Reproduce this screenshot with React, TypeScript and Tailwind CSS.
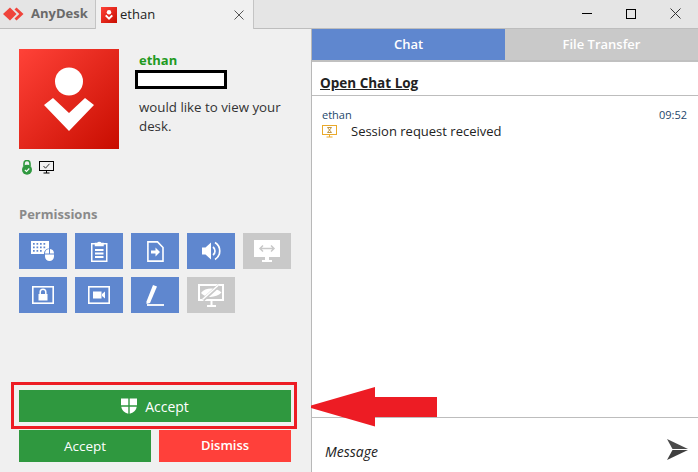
import React from 'react';

const font = "font-['Open_Sans','Noto_Sans',sans-serif]";

// --- Icons ---

const Logo: React.FC<{ className?: string }> = ({ className }) => (
  <svg className={className} viewBox="0 0 100 100">
    <defs>
      <linearGradient id="av" x1="0" y1="0" x2="1" y2="1">
        <stop offset="0" stopColor="#ff4238" />
        <stop offset="1" stopColor="#c80d00" />
      </linearGradient>
    </defs>
    <rect width="100" height="100" fill="url(#av)" />
    <circle cx="50" cy="32.500" r="14" fill="#fff" />
    <path d="M25 56L34 49L50 64L66 49L75 56L50 82Z" fill="#fff" />
  </svg>
);

const AnyDeskMark = () => (
  <svg width="25" height="14" viewBox="0 0 25 14">
    <path d="M2 7 L9 0.5 L15.5 7 L9 13.5 Z" fill="#ef443b" />
    <path d="M15.5 0.5 L22.5 7 L15.5 13.5 L13.5 11.5 L18.3 7 L13.5 2.5 Z" fill="#ef443b" />
  </svg>
);

const KeyboardMouse = () => (
  <svg width="24" height="20" viewBox="0 0 24 20" fill="#fff">
    <path fillRule="evenodd" d="M0 0H18V7.5A5 5 0 0 0 13 12.500V13H0ZM2 2V3.700H3.700V2ZM5.500 2V3.700H7.200V2ZM9 2V3.700H10.700V2ZM12.500 2V3.700H14.200V2ZM2 5.500V7.200H3.700V5.500ZM5.500 5.500V7.200H7.200V5.500ZM9 5.500V7.200H10.700V5.500ZM12.500 5.500V7.200H14.200V5.500ZM2 9V10.700H3.700V9ZM5.500 9V10.700H7.200V9ZM9 9V10.700H10.700V9Z" />
    <path d="M14 12.500A4.500 4.500 0 0 1 18 8.100V12.500ZM19 8.100A4.500 4.500 0 0 1 23 12.500H19ZM14 13.500H23V15.500A4.500 4.500 0 0 1 14 15.500Z" />
  </svg>
);

const Clipboard = () => (
  <svg width="18" height="21" viewBox="0 0 18 21" fill="none" stroke="#fff" strokeWidth="1.500">
    <path d="M5.500 2.750H1.750V20.250H16.750V2.750H13" />
    <path d="M5.500 4.500V2.500H7.500A2 2 0 0 1 11 2.500H13V4.500Z" fill="#fff" />
    <path d="M5 9H13.500M5 12.500H13.500M5 16H13.500" strokeWidth="2" />
  </svg>
);

const FileArrow = () => (
  <svg width="17" height="21" viewBox="0 0 17 21" fill="none">
    <path d="M0.900 0.900H10.500L16 6.500V20.100H0.900Z" stroke="#fff" strokeWidth="1.600" />
    <path d="M4 9.500H8.500V6.500L13 11L8.500 15.500V12.500H4Z" fill="#fff" />
  </svg>
);

const Speaker = () => (
  <svg width="19" height="20" viewBox="0 0 19 20" fill="none">
    <path d="M0 6.500H3.500L9 1.500V18.500L3.500 13.500H0Z" fill="#fff" />
    <path d="M11 6A5 5 0 0 1 11 14" stroke="#fff" strokeWidth="1.700" />
    <path d="M13 1.500A10 10 0 0 1 13 18.500" stroke="#fff" strokeWidth="1.700" />
  </svg>
);

const MonitorArrows = () => (
  <svg width="26" height="23" viewBox="0 0 26 23">
    <path d="M0 0H26V17H15V20H18V22H8V20H11V17H0Z" fill="#fff" />
    <path d="M6 8.500H20M9 5.500L6 8.500L9 11.500M17 5.500L20 8.500L17 11.500" fill="none" stroke="#c9c9c9" strokeWidth="1.500" />
  </svg>
);

const ScreenLock = () => (
  <svg width="22" height="18" viewBox="0 0 22 18" fill="none">
    <rect x="0.800" y="0.800" width="20.400" height="16.400" stroke="#fff" strokeWidth="1.600" />
    <path d="M8.200 8V6A2.800 2.800 0 0 1 13.800 6V8" stroke="#fff" strokeWidth="1.500" />
    <rect x="6.500" y="8" width="9" height="6.500" fill="#fff" />
  </svg>
);

const ScreenCamera = () => (
  <svg width="22" height="18" viewBox="0 0 22 18" fill="none">
    <rect x="0.800" y="0.800" width="20.400" height="16.400" stroke="#fff" strokeWidth="1.600" />
    <rect x="5" y="5.500" width="8.500" height="7" fill="#fff" />
    <path d="M14 8L17 5.500V12.500L14 10Z" fill="#fff" />
  </svg>
);

const PenLine = () => (
  <svg width="19" height="22" viewBox="0 0 19 22" fill="none">
    <path d="M0.500 17.500L7 1L11 2.500L4 19L0.500 20Z" fill="#fff" />
    <path d="M1 21H18" stroke="#fff" strokeWidth="1.800" />
  </svg>
);

const MonitorEye = () => (
  <svg width="26" height="23" viewBox="0 0 26 23" fill="none">
    <path d="M1 1H25V16H1Z" stroke="#fff" strokeWidth="2" />
    <path d="M9 22H18M13.500 17V21" stroke="#fff" strokeWidth="2" />
    <path d="M3 9C7 3.500 18 3 23.500 8.500C18 14 8 14.500 3 9Z" fill="#fff" />
    <path d="M5 16L21 1.500" stroke="#c9c9c9" strokeWidth="3.500" />
    <path d="M4.500 15.500L20.500 1" stroke="#fff" strokeWidth="1.500" />
  </svg>
);

const Shield = () => (
  <svg width="16" height="16" viewBox="0 0 16 16" fill="#fff">
    <path d="M0 0.500H7.300V7.300H0ZM8.700 0.500H16V7.300H8.700ZM0.300 8.700H7.300V15.800C3.500 14.500 0.800 12.500 0.300 8.700ZM8.700 8.700H15.700C15.200 12.500 12.500 14.500 8.700 15.800Z" />
  </svg>
);

// --- Helper Components ---

const Tile: React.FC<{ off?: boolean; children: React.ReactNode }> = ({ off, children }) => (
  <div className={`w-12 h-9 flex items-center justify-center ${off ? 'bg-[#c9c9c9]' : 'bg-[#5f87cf]'}`}>{children}</div>
);

const App: React.FC = () => {
  return (
    <div className={`relative w-[698px] h-[472px] flex flex-col overflow-hidden bg-white text-[#222] ${font}`}>
      {/* title bar */}
      <header className="h-[29px] flex-none flex bg-[#e5e5e5] border-b border-[#bdbdbd]">
        <div className="w-[95px] flex-none flex items-center gap-[5px] pl-[1px] pb-[1px]">
          <AnyDeskMark />
          <span className="text-[13px] font-bold text-[#6a6a6a]">AnyDesk</span>
        </div>
        <div className="w-[159px] h-[29px] flex-none flex items-center bg-[#f0f0f0] border-x border-[#c4c4c4] pl-[5px] pr-[9px]">
          <Logo className="w-4 h-4 flex-none" />
          <span className="ml-[3px] text-[13px] text-[#222]">ethan</span>
          <svg className="ml-auto" width="10" height="10" viewBox="0 0 10 10">
            <path d="M0.500 0.500L9.500 9.500M9.500 0.500L0.500 9.500" stroke="#555" strokeWidth="1" />
          </svg>
        </div>
        <div className="ml-auto flex items-center pr-[1px] pb-[1px]">
          <div className="w-11 flex justify-center">
            <div className="w-[10px] h-px bg-black" />
          </div>
          <div className="w-11 flex justify-center">
            <div className="w-[10px] h-[10px] border border-black" />
          </div>
          <div className="w-11 flex justify-center">
            <svg width="11" height="11" viewBox="0 0 11 11">
              <path d="M0.500 0.500L10.500 10.500M10.500 0.500L0.500 10.500" stroke="#333" strokeWidth="1" />
            </svg>
          </div>
        </div>
      </header>

      <div className="flex-1 flex min-h-0">
        {/* left panel */}
        <aside className="w-[312px] flex-none flex flex-col bg-[#f0f0f0] border-r border-[#b8b8b8] px-[19px] pt-5">
          <div className="flex gap-5">
            <Logo className="w-[100px] h-[100px] flex-none" />
            <div className="pt-[1px]">
              <div className="text-[13px] leading-[20px] font-bold text-[#1f9a1f]">ethan</div>
              <div className="-ml-1 w-[92px] h-[19px] bg-white border-[3px] border-black" />
              <p className="mt-[9px] w-[160px] text-[13.300px] leading-[19px] text-[#333]">would like to view your desk.</p>
            </div>
          </div>

          <div className="mt-[11px] flex items-center gap-[7px] pl-[3px]">
            <svg width="10" height="15" viewBox="0 0 10 15">
              <path d="M2 6V3.500A3 3 0 0 1 8 3.500V6" fill="none" stroke="#2f983f" strokeWidth="1.600" />
              <circle cx="5" cy="9.800" r="5" fill="#2f983f" />
              <path d="M2.800 9.800L4.500 11.500L7.300 8.500" fill="none" stroke="#fff" strokeWidth="1.100" />
            </svg>
            <svg width="15" height="13" viewBox="0 0 15 13" fill="none">
              <rect x="0.500" y="0.500" width="14" height="9" stroke="#000" />
              <path d="M4.500 5L6.500 7.200L10.500 2.800" stroke="#333" />
              <path d="M4.500 12H10.500M7.500 10V12" stroke="#000" />
            </svg>
          </div>

          <div className="mt-[30px] text-[13px] leading-[18px] font-bold text-[#8a8a8a]">Permissions</div>
          <div className="mt-[10px] grid grid-cols-[repeat(5,48px)] gap-2">
            <Tile><KeyboardMouse /></Tile>
            <Tile><Clipboard /></Tile>
            <Tile><FileArrow /></Tile>
            <Tile><Speaker /></Tile>
            <Tile off><MonitorArrows /></Tile>
            <Tile><ScreenLock /></Tile>
            <Tile><ScreenCamera /></Tile>
            <Tile><PenLine /></Tile>
            <Tile off><MonitorEye /></Tile>
          </div>

          <button className="mt-[77px] w-[272px] h-8 flex-none flex items-center justify-center gap-2 bg-[#2f983f] text-white text-[14px] font-medium">
            <Shield />
            Accept
          </button>
          <div className="mt-2 flex gap-2">
            <button className="w-[132px] h-8 bg-[#2f983f] text-white text-[13.500px] font-medium">Accept</button>
            <button className="w-[132px] h-8 bg-[#ff403a] text-white text-[13px] font-semibold">Dismiss</button>
          </div>
        </aside>

        {/* right panel */}
        <main className="flex-1 min-w-0 flex flex-col">
          <div className="h-[33px] flex-none flex border-b-2 border-[#c0c0c0]">
            <div className="w-[193px] flex items-center justify-center bg-[#5f87cf] text-white text-[13px] font-semibold">Chat</div>
            <div className="flex-1 flex items-center justify-center bg-[#c9c9c9] text-white text-[13px] font-semibold">File Transfer</div>
          </div>
          <div className="h-[34px] flex-none flex items-end border-b border-[#bdbdbd] pl-2 pb-[2px]">
            <span className="text-[13.500px] leading-[20px] font-bold underline text-[#222]">Open Chat Log</span>
          </div>
          <div className="flex-1 px-[10px] pt-[11px]">
            <div className="flex justify-between pr-[1px] text-[11px] leading-[16px] text-[#24476b]">
              <span>ethan</span>
              <span>09:52</span>
            </div>
            <div className="flex items-center">
              <svg className="flex-none" width="15" height="13" viewBox="0 0 15 13" fill="none">
                <rect x="0.500" y="0.500" width="14" height="9" stroke="#eaa92a" />
                <path d="M5.500 2.500H9.500L5.500 7.500H9.500Z" stroke="#b98a30" strokeWidth="0.900" />
                <path d="M4.500 12H10.500M7.500 10V12" stroke="#eaa92a" />
              </svg>
              <span className="ml-[14px] text-[13px] leading-[17px] text-[#222]">Session request received</span>
            </div>
          </div>
          <div className="h-[55px] flex-none flex items-center border-t border-[#bdbdbd] pl-[13px] pr-[10px] pt-3">
            <span className="text-[14px] italic text-[#222]">Message</span>
            <svg className="ml-auto -mt-[3px]" width="21" height="21" viewBox="0 0 21 21">
              <path d="M0 0L21 10H5.500Z" fill="#4a4a4a" />
              <path d="M0 21L21 11H5.500Z" fill="#3f3f3f" />
            </svg>
          </div>
        </main>
      </div>

      {/* annotations on top of the screenshot */}
      <div className="absolute left-[11px] top-[382px] w-[286px] h-[47px] border-[3px] border-[#ed1c24]" />
      <svg className="absolute left-[311px] top-[387px]" width="127" height="40" viewBox="0 0 127 40">
        <path d="M0 18.500V21L64 39.500V30H126V10H64V0Z" fill="#ed1c24" />
      </svg>
    </div>
  );
};

export default App;
